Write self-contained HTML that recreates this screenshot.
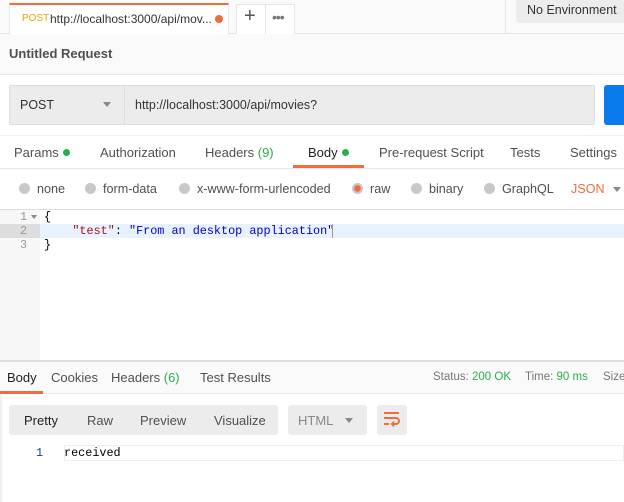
<!DOCTYPE html>
<html><head><meta charset="utf-8"><style>
*{box-sizing:border-box;margin:0;padding:0}
body{width:624px;height:502px;overflow:hidden;background:#fff;font-family:"Liberation Sans",sans-serif;font-size:12px;color:#505050;position:relative}
.a{position:absolute;white-space:nowrap}
.t{font-size:13px}
.r{font-size:12.6px}
.mono{font-family:"Liberation Mono",monospace;font-size:11.8px}
.dot{display:inline-block;width:7px;height:7px;border-radius:50%;background:#26b047;margin-left:4px;vertical-align:1px}
.rad{display:inline-block;width:11px;height:11px;border-radius:50%;background:#c8c8c8;margin-right:7px;vertical-align:-1px}
</style></head><body>
<div class="a" style="left:0;top:0;width:624px;height:34px;background:#fafafa;border-bottom:1px solid #e6e6e6"></div>
<div class="a" style="left:0;top:34px;width:624px;height:40px;background:#fafafa"></div>
<div class="a" style="left:9px;top:3px;width:220px;height:32px;background:#fff;border-top:2px solid #f26b3a;border-left:1px solid #e6e6e6;border-right:1px solid #e6e6e6"></div>
<div class="a" style="left:22px;top:13px;font-size:10px;color:#f2a000">POST</div>
<div class="a" style="left:50px;top:12px;font-size:12px;color:#333">http://localhost:3000/api/mov...</div>
<div class="a" style="left:215px;top:15px;width:8px;height:8px;border-radius:50%;background:#f26b3a"></div>
<div class="a" style="left:236px;top:4px;width:59px;height:30px;border:1px solid #e6e6e6;border-bottom:none;background:#fff"></div>
<div class="a" style="left:265px;top:4px;width:1px;height:30px;background:#e6e6e6"></div>
<div class="a" style="left:244px;top:5px;font-size:20px;color:#555">+</div>
<div class="a" style="left:272px;top:9px;font-size:14px;color:#777;letter-spacing:-1px">•••</div>
<div class="a" style="left:505px;top:0;width:1px;height:34px;background:#e6e6e6"></div>
<div class="a" style="left:516px;top:0;width:110px;height:23px;background:#ececec;border-radius:0 0 3px 3px"></div>
<div class="a" style="left:527px;top:3px;font-size:12.5px;color:#333">No Environment</div>
<div class="a" style="left:9px;top:46px;font-size:13px;font-weight:bold;color:#505050">Untitled Request</div>
<div class="a" style="left:0;top:74px;width:624px;height:1px;background:#e6e6e6"></div>
<div class="a" style="left:9px;top:85px;width:586px;height:40px;background:#ececec;border:1px solid #ddd;border-radius:2px"></div>
<div class="a" style="left:124px;top:86px;width:1px;height:38px;background:#ddd"></div>
<div class="a" style="left:20px;top:98px;font-size:12.5px;color:#333">POST</div>
<div class="a" style="left:103px;top:102px;border-left:4px solid transparent;border-right:4px solid transparent;border-top:5px solid #888"></div>
<div class="a" style="left:135px;top:98px;font-size:12.5px;color:#333">http://localhost:3000/api/movies?</div>
<div class="a" style="left:604px;top:85px;width:22px;height:40px;background:#097bed;border-radius:3px 0 0 3px"></div>
<div class="a" style="left:0;top:135px;width:624px;height:1px;background:#f0f0f0"></div>
<div class="a t" style="left:14px;top:145px">Params<span class="dot"></span></div>
<div class="a t" style="left:100px;top:145px">Authorization</div>
<div class="a t" style="left:205px;top:145px">Headers <span style="color:#26b047">(9)</span></div>
<div class="a t" style="left:308px;top:145px;color:#222">Body<span class="dot"></span></div>
<div class="a" style="left:293px;top:165px;width:71px;height:3px;background:#f26b3a"></div>
<div class="a t" style="left:379px;top:145px">Pre-request Script</div>
<div class="a t" style="left:510px;top:145px">Tests</div>
<div class="a t" style="left:570px;top:145px">Settings</div>
<div class="a" style="left:0;top:168px;width:624px;height:1px;background:#e6e6e6"></div>
<div class="a r" style="left:19px;top:182px"><span class="rad"></span>none</div>
<div class="a r" style="left:85px;top:182px"><span class="rad"></span>form-data</div>
<div class="a r" style="left:179px;top:182px"><span class="rad"></span>x-www-form-urlencoded</div>
<div class="a r" style="left:352px;top:182px"><span class="rad" style="background:radial-gradient(circle,#f26b3a 3px,#c8c8c8 3.5px)"></span>raw</div>
<div class="a r" style="left:411px;top:182px"><span class="rad"></span>binary</div>
<div class="a r" style="left:484px;top:182px"><span class="rad"></span>GraphQL</div>
<div class="a r" style="left:571px;top:182px;color:#f26b3a">JSON</div>
<div class="a" style="left:613px;top:187px;border-left:4px solid transparent;border-right:4px solid transparent;border-top:5px solid #888"></div>
<div class="a" style="left:0;top:209px;width:624px;height:1px;background:#ddd"></div>
<div class="a" style="left:0;top:210px;width:40px;height:150px;background:#f7f7f7"></div>
<div class="a" style="left:0;top:224px;width:40px;height:14px;background:#ddd"></div>
<div class="a" style="left:40px;top:224px;width:584px;height:14px;background:#e8f2fe"></div>
<div class="a mono" style="left:20px;top:210px;color:#999;line-height:14px">1<br>2<br>3</div>
<div class="a" style="left:31px;top:215px;border-left:3px solid transparent;border-right:3px solid transparent;border-top:4px solid #888"></div>
<div class="a mono" style="left:44px;top:210px;line-height:14px;color:#000">{<br>&nbsp;&nbsp;&nbsp;&nbsp;<span style="color:#a31515">"test"</span>: <span style="color:#0000cc">"From an desktop application"</span><br>}</div>
<div class="a" style="left:332px;top:224px;width:1px;height:14px;background:#999"></div>
<div class="a" style="left:0;top:360px;width:624px;height:2px;background:#e0e0e0"></div>
<div class="a" style="left:0;top:362px;width:624px;height:32px;background:#fafafa;border-bottom:1px solid #e6e6e6"></div>
<div class="a t" style="left:7px;top:370px;color:#222">Body</div>
<div class="a t" style="left:51px;top:370px">Cookies</div>
<div class="a t" style="left:111px;top:370px">Headers <span style="color:#26b047">(6)</span></div>
<div class="a t" style="left:200px;top:370px">Test Results</div>
<div class="a" style="left:0;top:391px;width:43px;height:3px;background:#f26b3a"></div>
<div class="a" style="left:433px;top:371px;font-size:11.5px;color:#777">Status: <span style="color:#26b047">200 OK</span></div>
<div class="a" style="left:525px;top:371px;font-size:11.5px;color:#777">Time: <span style="color:#26b047">90 ms</span></div>
<div class="a" style="left:603px;top:371px;font-size:11.5px;color:#777">Size</div>
<div class="a" style="left:9px;top:405px;width:269px;height:30px;background:#ececec;border-radius:3px"></div>
<div class="a t" style="left:24px;top:413px;color:#222">Pretty</div>
<div class="a t" style="left:87px;top:413px">Raw</div>
<div class="a t" style="left:140px;top:413px">Preview</div>
<div class="a t" style="left:214px;top:413px">Visualize</div>
<div class="a" style="left:288px;top:405px;width:79px;height:30px;background:#ececec;border-radius:3px"></div>
<div class="a t" style="left:298px;top:413px;color:#888">HTML</div>
<div class="a" style="left:345px;top:418px;border-left:4px solid transparent;border-right:4px solid transparent;border-top:5px solid #888"></div>
<div class="a" style="left:377px;top:405px;width:30px;height:30px;background:#ececec;border-radius:3px"></div>
<svg class="a" style="left:383px;top:410px" width="18" height="18" viewBox="0 0 18 18"><g fill="none" stroke="#f26b3a" stroke-width="2"><path d="M1 3h15M1 8h12a3 3 0 0 1 0 6h-4"/><path d="M1 14h5"/><path d="M11 11.5l-2.5 2.5 2.5 2.5" stroke-width="1.5"/></g></svg>
<div class="a" style="left:64px;top:445px;width:560px;height:16px;background:#fff;border:1px solid #eee"></div>
<div class="a mono" style="left:36px;top:446px;color:#1f3a93">1</div>
<div class="a mono" style="left:64px;top:446px;color:#000">received</div>
<div class="a" style="left:0;top:395px;width:2px;height:107px;background:#f0f0f0"></div>
</body></html>
